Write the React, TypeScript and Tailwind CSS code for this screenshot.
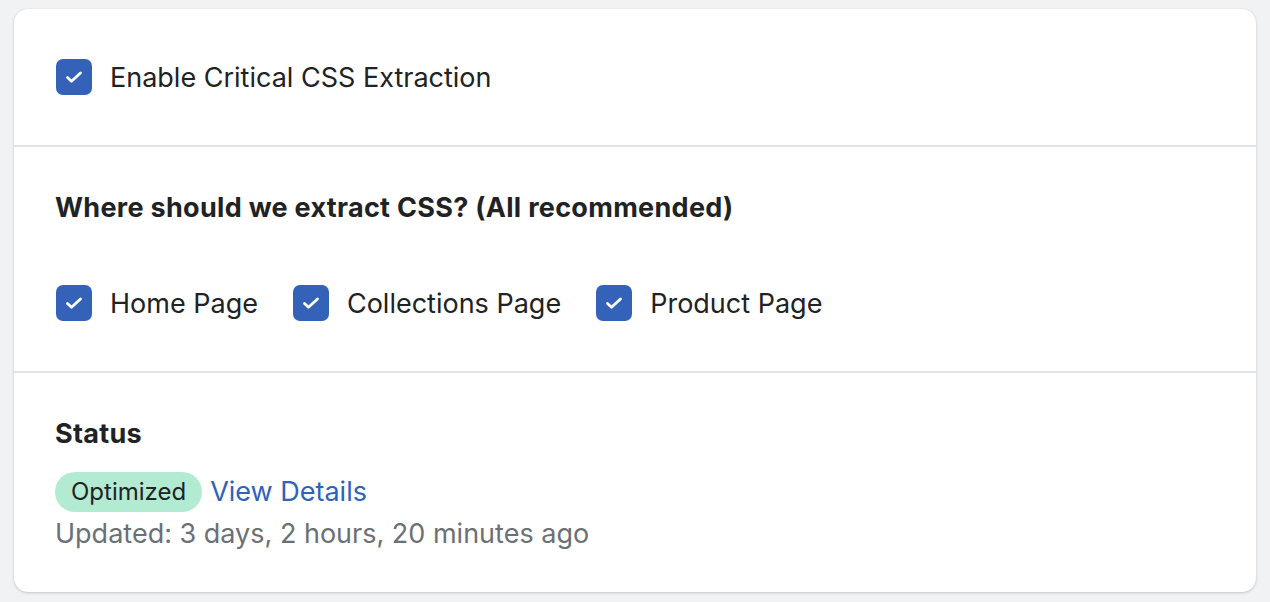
import React, { useState } from 'react';

const Check: React.FC<{ checked: boolean; onToggle: () => void; label: string }> = ({ checked, onToggle, label }) => (
  <label className="flex items-center gap-[18px] cursor-pointer select-none" onClick={onToggle}>
    <span
      className={`flex h-[36px] w-[36px] items-center justify-center rounded-[7px] ${
        checked ? 'bg-[#3362b8]' : 'border-2 border-[#8c9196] bg-white'
      }`}
    >
      {checked && (
        <svg width="20" height="14" viewBox="0 0 20 14" fill="none">
          <path d="M3.5 7.5l4 3.8L16.5 3" stroke="white" strokeWidth="2.8" strokeLinecap="round" strokeLinejoin="round" />
        </svg>
      )}
    </span>
    <span className="pt-[2px] text-[27px] leading-[32px] text-[#202223]">{label}</span>
  </label>
);

export default function App() {
  const [enabled, setEnabled] = useState(true);
  const [pages, setPages] = useState({ home: true, collections: true, product: true });

  const toggle = (k: keyof typeof pages) => setPages((p) => ({ ...p, [k]: !p[k] }));

  return (
    <div className="min-h-[602px] bg-[#f1f2f4] pt-[9px] px-[14px] pb-[10px]" style={{ fontFamily: 'Inter, "Noto Sans", sans-serif' }}>
      <div className="overflow-hidden rounded-[14px] bg-white shadow-[0_1px_3px_rgba(0,0,0,0.18),0_0_1px_rgba(0,0,0,0.08)]">
        <section className="px-[42px] py-[50px]">
          <Check checked={enabled} onToggle={() => setEnabled(!enabled)} label="Enable Critical CSS Extraction" />
        </section>

        <section className="border-t-2 border-[#e1e3e5] px-[41px] pt-[45px] pb-[50px]">
          <h2 className="text-[27px] font-bold leading-[32px] tracking-[0.3px] text-[#202223]">
            Where should we extract CSS? (All recommended)
          </h2>
          <div className="ml-[1px] mt-[61px] flex items-center gap-[35px]">
            <Check checked={pages.home} onToggle={() => toggle('home')} label="Home Page" />
            <Check checked={pages.collections} onToggle={() => toggle('collections')} label="Collections Page" />
            <Check checked={pages.product} onToggle={() => toggle('product')} label="Product Page" />
          </div>
        </section>

        <section className="border-t-2 border-[#e1e3e5] px-[41px] pt-[45px] pb-[42px]">
          <h2 className="text-[27px] font-bold leading-[32px] tracking-[0.3px] text-[#202223]">Status</h2>
          <div className="mt-[22px] flex items-center gap-[8px]">
            <span className="inline-flex h-[40px] items-center rounded-full bg-[#b3ebd2] px-[16px] text-[24px] text-[#202223]">
              Optimized
            </span>
            <a href="#" className="text-[27px] leading-[32px] text-[#2f62b9]">
              View Details
            </a>
          </div>
          <p className="mt-[6px] text-[27px] leading-[32px] text-[#6b7075]">Updated: 3 days, 2 hours, 20 minutes ago</p>
        </section>
      </div>
    </div>
  );
}
